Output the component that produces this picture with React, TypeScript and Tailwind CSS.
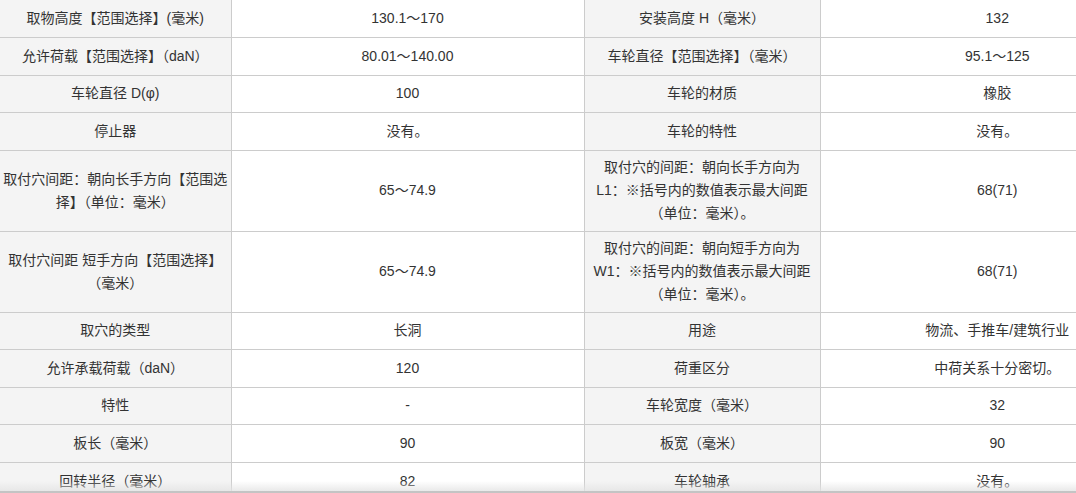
import type { ReactNode } from "react";

type Row = {
  label: ReactNode;
  value: ReactNode;
  label2: ReactNode;
  value2: ReactNode;
  tall?: boolean;
};

const rows: Row[] = [
  { label: "取物高度【范围选择】(毫米)", value: "130.1～170", label2: "安装高度 H（毫米）", value2: "132" },
  { label: "允许荷载【范围选择】（daN）", value: "80.01～140.00", label2: "车轮直径【范围选择】（毫米）", value2: "95.1～125" },
  { label: "车轮直径 D(φ)", value: "100", label2: "车轮的材质", value2: "橡胶" },
  { label: "停止器", value: "没有。", label2: "车轮的特性", value2: "没有。" },
  {
    label: (
      <>
        取付穴间距：朝向长手方向【范围选
        <br />
        择】（单位：毫米）
      </>
    ),
    value: "65～74.9",
    label2: (
      <>
        取付穴的间距：朝向长手方向为
        <br />
        L1：※括号内的数值表示最大间距
        <br />
        （单位：毫米）。
      </>
    ),
    value2: "68(71)",
    tall: true,
  },
  {
    label: (
      <>
        取付穴间距 短手方向【范围选择】
        <br />
        （毫米）
      </>
    ),
    value: "65～74.9",
    label2: (
      <>
        取付穴的间距：朝向短手方向为
        <br />
        W1：※括号内的数值表示最大间距
        <br />
        （单位：毫米）。
      </>
    ),
    value2: "68(71)",
    tall: true,
  },
  { label: "取穴的类型", value: "长洞", label2: "用途", value2: "物流、手推车/建筑行业" },
  { label: "允许承载荷载（daN）", value: "120", label2: "荷重区分", value2: "中荷关系十分密切。" },
  { label: "特性", value: "-", label2: "车轮宽度（毫米）", value2: "32" },
  { label: "板长（毫米）", value: "90", label2: "板宽（毫米）", value2: "90" },
  { label: "回转半径（毫米）", value: "82", label2: "车轮轴承", value2: "没有。" },
];

export default function App() {
  return (
    <div
      className="relative h-[493px] w-[1076px] overflow-hidden bg-white text-[14px] leading-[23px] text-[#333]"
      style={{ fontFamily: '"Liberation Sans", "Noto Sans CJK SC", sans-serif' }}
    >
      <table className="w-[1174px] table-fixed border-collapse">
        <colgroup>
          <col className="w-[231px]" />
          <col className="w-[353px]" />
          <col className="w-[236px]" />
          <col className="w-[354px]" />
        </colgroup>
        <tbody>
          {rows.map((r, i) => (
            <tr
              key={i}
              className={`${r.tall ? "h-[81px]" : "h-[37.5px]"} ${
                i === 0 ? "" : "border-t border-[#cccccc]"
              }`}
            >
              <td className="whitespace-nowrap border-r border-[#cccccc] bg-[#f4f4f4] px-0 text-center align-middle">
                {r.label}
              </td>
              <td className="whitespace-nowrap border-r border-[#cccccc] bg-white px-0 text-center align-middle">
                {r.value}
              </td>
              <td className="whitespace-nowrap border-r border-[#cccccc] bg-[#f4f4f4] px-0 text-center align-middle">
                {r.label2}
              </td>
              <td className="whitespace-nowrap bg-white px-0 text-center align-middle">{r.value2}</td>
            </tr>
          ))}
        </tbody>
      </table>

      {/* fade at bottom edge of the scroll box */}
      <div className="pointer-events-none absolute bottom-0 left-0 h-[12px] w-full border-b-2 border-[#c4c4c4] bg-gradient-to-b from-transparent to-[#e4e4e4]/80" />
    </div>
  );
}
